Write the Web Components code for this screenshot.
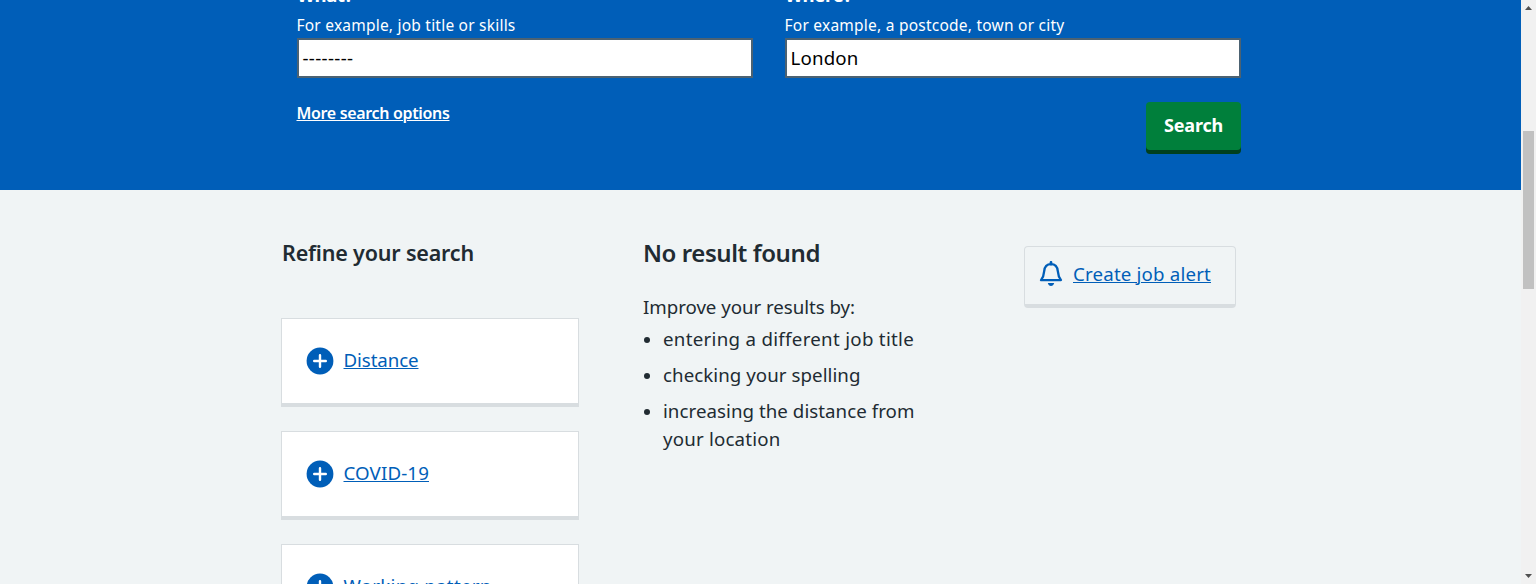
<!DOCTYPE html>
<html lang="en">
<head>
<meta charset="utf-8">
<title>Search jobs</title>
<style>
html,body{margin:0;height:584px;overflow:hidden}
body{font-family:"Noto Sans","Open Sans",sans-serif;color:#212b32;background:#f0f4f5}
</style>
</head>
<body>
<jobs-page></jobs-page>
<script>
const define = (name, html, setup) => customElements.define(name, class extends HTMLElement {
  connectedCallback() {
    if (this.shadowRoot) return;
    const t = document.createElement('template');
    t.innerHTML = html;
    this.attachShadow({mode: 'open'}).append(t.content.cloneNode(true));
    if (setup) setup(this, this.shadowRoot);
  }
});

// Tracks a line of text out to the width given in its "fit" attribute.
define('fit-text', `<style>
:host{display:block;white-space:nowrap}
span{display:inline-block}
:host([underline]) span{text-decoration:underline;text-decoration-thickness:1px;text-underline-offset:1px}
</style><span><slot></slot></span>`, (el) => {
  const n = el.textContent.length;
  const span = el.shadowRoot.querySelector('span');
  const natural = span.getBoundingClientRect().width;
  if (natural) span.style.letterSpacing = ((+el.getAttribute('fit') - natural) / n).toFixed(3) + 'px';
});

define('search-field', `<style>
:host{display:flex;flex-direction:column;width:456px;color:#fff}
.label{font-weight:700;font-size:18.5px;line-height:20px;height:28px}
.hint{font-size:15.5px;line-height:24px;height:25px}
.box{box-sizing:border-box;height:40px;border:2px solid #4c6272;background:#fff;color:#000;padding:0 3.5px;font-size:18.7px;line-height:36px}
</style>
<div class="label"><slot name="label"></slot></div>
<div class="hint"><slot name="hint"></slot></div>
<div class="box"><slot></slot></div>`);

define('search-button', `<style>
:host{box-sizing:border-box;display:flex;justify-content:center;width:95px;height:48px;border-radius:4px;background:#007f3b;box-shadow:0 4px 0 #00401e;color:#fff;font-size:18px;font-weight:700;line-height:46px}
</style><slot></slot>`);

define('search-banner', `<style>
:host{display:block;height:190px;background:#005eb8;overflow:hidden}
.in{width:944px;margin-left:297px}
.fields{display:flex;justify-content:space-between;margin-top:-15px}
.fields fit-text[slot=hint]{margin-left:-.5px}
.actions{display:flex;justify-content:space-between;align-items:flex-start;margin-top:24px;color:#fff}
.more{font-size:16px;font-weight:600;line-height:22px;margin-left:-.5px}
</style>
<div class="in">
<div class="fields">
<search-field><fit-text slot="label" fit="56">What?</fit-text><fit-text slot="hint" fit="219">For example, job title or skills</fit-text><fit-text fit="51">--------</fit-text></search-field>
<search-field><fit-text slot="label" fit="67">Where?</fit-text><fit-text slot="hint" fit="280">For example, a postcode, town or city</fit-text><fit-text fit="68">London</fit-text></search-field>
</div>
<div class="actions"><fit-text class="more" underline fit="153">More search options</fit-text>
<search-button><fit-text fit="59">Search</fit-text></search-button></div>
</div>`);

define('filter-card', `<style>
:host{box-sizing:border-box;display:flex;align-items:center;gap:9.5px;width:298px;height:89px;padding-left:24px;background:#fff;border:1px solid #d8dde0;border-bottom-width:4px;color:#005eb8;font-size:18.7px;line-height:28px}
svg{display:block;flex:none}
slot{display:block;margin-top:-3px}
</style>
<svg width="28" height="28" viewBox="0 0 28 28"><circle cx="14" cy="14" r="13.4" fill="#005eb8"/><path d="M14 8.2v11.6M8.2 14h11.6" stroke="#fff" stroke-width="2.4" stroke-linecap="round"/></svg>
<slot></slot>`);

define('filter-column', `<style>
:host{display:block;width:298px}
h2{margin:-1px 0 49px 1px;font-size:21.5px;font-weight:650;line-height:32px;height:32px}
.list{display:flex;flex-direction:column;gap:24px}
</style>
<h2><fit-text fit="192">Refine your search</fit-text></h2>
<div class="list">
<filter-card><fit-text underline fit="75">Distance</fit-text></filter-card>
<filter-card><fit-text underline fit="85.5">COVID-19</fit-text></filter-card>
<filter-card><fit-text underline fit="148">Working pattern</fit-text></filter-card>
</div>`);

define('result-column', `<style>
:host{display:block;width:320px;font-size:18.7px;line-height:28px}
h1{margin:-1px 0 24px;font-size:24px;font-weight:650;line-height:32px}
ul{list-style:none;margin:4px 0 0;padding:0;display:flex;flex-direction:column;gap:8px}
li{display:grid;grid-template-columns:20px auto}
li::before{content:"";width:6px;height:6px;border-radius:50%;background:#212b32;margin:12px 0 0 1px}
</style>
<h1><fit-text fit="177">No result found</fit-text></h1>
<fit-text fit="212">Improve your results by:</fit-text>
<ul>
<li><fit-text fit="251">entering a different job title</fit-text></li>
<li><fit-text fit="197.5">checking your spelling</fit-text></li>
<li><div><fit-text fit="251.5">increasing the distance from</fit-text><fit-text fit="117.5">your location</fit-text></div></li>
</ul>`);

define('job-alert', `<style>
:host{box-sizing:border-box;display:flex;width:212px;height:62px;padding:14px 0 0 14px;gap:10px;border:1px solid #d8dde0;border-bottom-width:4px;border-radius:4px;color:#005eb8;font-size:18.7px;line-height:26px}
svg{display:block;flex:none}
</style>
<svg width="24" height="26" viewBox="0 0 24 26" fill="none" stroke="#005eb8"><path d="M12 3.1C7.8 3.1 5.6 5.8 5.2 10.1 4.9 14.2 3.9 16.7 2 19.1h20c-1.9-2.4-2.9-4.9-3.2-9C18.4 5.8 16.2 3.1 12 3.1z" stroke-width="2.3" stroke-linejoin="round"/><path d="M12 1.2v2" stroke-width="2.6" stroke-linecap="round"/><path d="M8.8 22h6.4c-.5 2-1.6 3-3.2 3s-2.7-1-3.2-3z" fill="#005eb8" stroke="none"/></svg>
<fit-text underline fit="138">Create job alert</fit-text>`);

define('scroll-bar', `<style>
:host{box-sizing:border-box;display:flex;flex-direction:column;align-items:center;width:15px;height:584px;background:#f1f1f1;padding:6px 0;justify-content:space-between}
svg{display:block}
.thumb{width:11px;height:158px;background:#c1c1c1;margin:121px 0 auto}
</style>
<svg width="7" height="4" viewBox="0 0 7 4"><path d="M3.5 0L7 4H0z" fill="#505050"/></svg>
<div class="thumb"></div>
<svg width="7" height="4" viewBox="0 0 7 4"><path d="M0 0h7L3.5 4z" fill="#505050"/></svg>`);

define('jobs-page', `<style>
:host{display:grid;grid-template-columns:1521px 15px;width:1536px;height:584px;overflow:hidden}
main{height:584px;overflow:hidden}
.cols{display:flex;align-items:flex-start;padding:48px 0 0 281px}
result-column{margin-left:64px}
job-alert{margin:8px 0 0 61px}
</style>
<main><search-banner></search-banner>
<div class="cols"><filter-column></filter-column><result-column></result-column><job-alert></job-alert></div></main>
<scroll-bar></scroll-bar>`);
</script>
</body>
</html>
